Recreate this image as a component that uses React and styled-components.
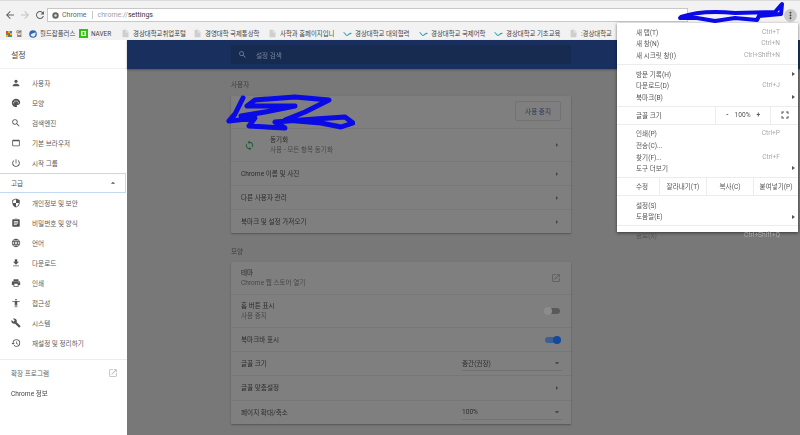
import React from 'react';
import styled, { createGlobalStyle } from 'styled-components';
import {
  MdPerson, MdPalette, MdSearch, MdWebAsset, MdPowerSettingsNew, MdSecurity, MdAssignment,
  MdLanguage, MdFileDownload, MdPrint, MdAccessibility, MdBuild, MdRestore, MdOpenInNew,
  MdSync, MdArrowDropDown, MdArrowDropUp, MdArrowBack, MdArrowForward, MdRefresh,
  MdMoreVert, MdFullscreen, MdInsertDriveFile,
} from 'react-icons/md';

const GlobalStyle = createGlobalStyle`
  html, body { margin: 0; padding: 0; width: 800px; height: 435px; overflow: hidden; background: #777; }
  * { box-sizing: border-box; }
  body { font-family: Roboto, "Noto Sans CJK KR", "Liberation Sans", sans-serif; }
`;

const Page = styled.div`
  position: relative;
  width: 800px;
  height: 435px;
  overflow: hidden;
  filter: blur(0.35px);
`;

const Toolbar = styled.div`
  display: flex;
  align-items: center;
  height: 27px;
  padding: 2px 3px 0 2px;
  background: #f2f2f2;
  border-top: 1px solid #dcdcdc;
`;

const NavButton = styled.span`
  display: flex;
  width: 15px;
  justify-content: center;
  color: ${(p) => (p.$off ? '#c4c4c4' : '#5f6368')};
  font-size: 12px;
`;

const Omnibox = styled.div`
  display: flex;
  align-items: center;
  flex: 1;
  height: 14px;
  margin-left: 0;
  padding-left: 4px;
  background: #fff;
  border: 1px solid #c8c8c8;
  font-size: 7px;
`;

const SiteLabel = styled.span`
  color: #666;
  padding: 0 5px 0 3px;
  border-right: 1px solid #c8c8c8;
  margin-right: 5px;
`;

const Url = styled.span`
  color: #333;
  em { color: #a0a0a0; font-style: normal; }
`;

const MenuDot = styled.span`
  display: flex;
  align-items: center;
  justify-content: center;
  width: 13px;
  height: 13px;
  margin-left: 96px;
  border-radius: 50%;
  background: #c9c9c9;
  color: #444;
  font-size: 11px;
`;

const Bookmarks = styled.div`
  display: flex;
  align-items: center;
  height: 13px;
  padding-left: 6px;
  background: #f2f2f2;
  font-size: 6.4px;
  color: #444;
  white-space: nowrap;
`;

const Bookmark = styled.span`
  display: flex;
  align-items: center;
  gap: 3px;
  width: ${(p) => p.$w}px;
  flex: none;
  overflow: hidden;
  svg { flex: none; }
`;

const AppsGrid = styled.span`
  display: grid;
  grid-template-columns: repeat(3, 2px);
  gap: 0;
  width: 6px;
  height: 6px;
  margin-right: 4px;
  i { width: 2px; height: 2px; }
`;

const Body = styled.div`
  display: flex;
  height: 395px;
`;

const Sidebar = styled.aside`
  width: 127px;
  flex: none;
  background: #fff;
  color: #5a5a5a;
  font-size: 6.6px;
`;

const SideTitle = styled.div`
  height: 29px;
  padding: 9px 0 0 11px;
  font-size: 8px;
  color: #444;
  border-bottom: 1px solid #f0f0f0;
`;

const SideList = styled.div`
  padding-top: 4px;
`;

const SideRow = styled.div`
  display: flex;
  align-items: center;
  height: 20px;
  padding-left: 11px;
  gap: 11px;
  svg { font-size: 10px; color: #555; flex: none; }
`;

const Advanced = styled.div`
  display: flex;
  align-items: center;
  justify-content: space-between;
  height: 20px;
  margin: 0 1px 0 0;
  padding: 0 7px 0 11px;
  border: 1px solid #c4d7f3;
  border-left: 0;
  color: #555;
  svg { font-size: 10px; }
`;

const SideDivider = styled.div`
  height: 1px;
  margin: 6px 0 3px;
  background: #ececec;
`;

const SideLink = styled.div`
  display: flex;
  align-items: center;
  justify-content: space-between;
  height: 20px;
  padding: 0 9px 0 11px;
  color: ${(p) => p.$color || '#666'};
  svg { font-size: 10px; color: #bbb; }
`;

const Main = styled.main`
  flex: 1;
  background: #787878;
  color: #333;
  font-size: 6.6px;
`;

const Banner = styled.div`
  height: 29px;
  padding: 5px 0 0 104px;
  background: #19305f;
  box-shadow: 0 1px 2px rgba(0, 0, 0, 0.3);
`;

const SearchBox = styled.div`
  display: flex;
  align-items: center;
  gap: 9px;
  width: 340px;
  height: 19px;
  padding-left: 7px;
  background: #172a50;
  color: #76839c;
  font-size: 6.6px;
  svg { font-size: 9px; }
`;

const Content = styled.div`
  width: 340px;
  margin-left: 104px;
`;

const SectionLabel = styled.div`
  height: ${(p) => p.$h}px;
  padding-top: ${(p) => p.$top}px;
  color: #3e3e3e;
  font-size: 6.6px;
`;

const Card = styled.section`
  background: #7f7f7f;
  border-radius: 1px;
  box-shadow: 0 1px 2px rgba(0, 0, 0, 0.3);
`;

const Row = styled.div`
  display: flex;
  align-items: center;
  height: ${(p) => p.$h}px;
  padding: 0 10px;
  border-top: ${(p) => (p.$first ? '0' : '1px solid #777')};
`;

const RowText = styled.div`
  flex: 1;
  line-height: 10px;
  color: #2c2c2c;
  small { display: block; font-size: 6.6px; color: #484848; }
`;

const SyncIcon = styled.span`
  display: flex;
  width: 29px;
  padding-left: 3px;
  color: #1f5a34;
  font-size: 11px;
`;

const Chevron = styled.span`
  width: 0;
  height: 0;
  margin-right: 3px;
  border-left: 2.5px solid #444;
  border-top: 2px solid transparent;
  border-bottom: 2px solid transparent;
`;

const StopButton = styled.span`
  padding: 4px 9px;
  margin-bottom: 2px;
  border: 1px solid #727272;
  border-radius: 2px;
  color: #2b3a55;
`;

const ExternalIcon = styled.span`
  display: flex;
  color: #5c5c5c;
  font-size: 10px;
`;

const Toggle = styled.span`
  position: relative;
  width: 15px;
  height: 6px;
  margin-right: 1px;
  border-radius: 3px;
  background: ${(p) => (p.$on ? '#3e5f93' : '#5a5a5a')};
  &::after {
    content: '';
    position: absolute;
    top: -1px;
    left: ${(p) => (p.$on ? '8px' : '-1px')};
    width: 8px;
    height: 8px;
    border-radius: 50%;
    background: ${(p) => (p.$on ? '#15479c' : '#8c8c8c')};
  }
`;

const SelectBox = styled.div`
  display: flex;
  align-items: center;
  justify-content: space-between;
  width: 100px;
  height: 14px;
  margin-right: -1px;
  border-bottom: 1px solid #727272;
  color: #2c2c2c;
  svg { font-size: 10px; color: #3a3a3a; }
`;

const Menu = styled.nav`
  position: absolute;
  top: 23px;
  left: 617px;
  width: 181px;
  height: 209px;
  background: #fff;
  box-shadow: 0 1px 3px rgba(0, 0, 0, 0.55);
  color: #555;
  font-size: 6.6px;
  padding-top: 3px;
`;

const MenuItem = styled.div`
  position: relative;
  display: flex;
  align-items: center;
  justify-content: space-between;
  height: 11.6px;
  padding: 0 18px 0 19px;
  white-space: nowrap;
  span { color: #a8a8a8; }
  &[data-sub]::after {
    content: '';
    position: absolute;
    right: 3px;
    top: 4px;
    border-left: 3px solid #555;
    border-top: 2px solid transparent;
    border-bottom: 2px solid transparent;
  }
`;

const MenuRule = styled.div`
  height: 1px;
  margin: ${(p) => p.$m || '3px 0 3px'};
  background: #ececec;
`;

const ZoomRow = styled.div`
  display: flex;
  align-items: center;
  height: 17px;
  padding-left: 19px;
`;

const ZoomLabel = styled.div`
  width: 79px;
`;

const ZoomControls = styled.div`
  display: flex;
  align-items: center;
  justify-content: space-between;
  width: 56px;
  height: 100%;
  padding: 0 10px;
  border-left: 1px solid #ececec;
  border-right: 1px solid #ececec;
`;

const ZoomFull = styled.div`
  display: flex;
  flex: 1;
  justify-content: center;
  color: #555;
  font-size: 12px;
`;

const EditRow = styled.div`
  display: flex;
  align-items: center;
  height: 17px;
`;

const EditCell = styled.div`
  display: flex;
  align-items: center;
  justify-content: center;
  width: ${(p) => p.$w}px;
  height: 100%;
  border-left: ${(p) => (p.$first ? '0' : '1px solid #ececec')};
  padding-left: ${(p) => (p.$first ? '19px' : '0')};
  justify-content: ${(p) => (p.$first ? 'flex-start' : 'center')};
`;

const Scribble = styled.svg`
  position: absolute;
  fill: none;
  stroke: #0a0ae6;
  stroke-linecap: round;
  stroke-linejoin: round;
  pointer-events: none;
`;

const sideTop = [
  [MdPerson, '사용자'], [MdPalette, '모양'], [MdSearch, '검색엔진'],
  [MdWebAsset, '기본 브라우저'], [MdPowerSettingsNew, '시작 그룹'],
];
const sideAdvanced = [
  [MdSecurity, '개인정보 및 보안'], [MdAssignment, '비밀번호 및 양식'], [MdLanguage, '언어'],
  [MdFileDownload, '다운로드'], [MdPrint, '인쇄'], [MdAccessibility, '접근성'],
  [MdBuild, '시스템'], [MdRestore, '재설정 및 정리하기'],
];

const bookmarkItems = [
  ['doc', '경상대학교취업포털', 72], ['doc', '경영대학 국제통상학', 75], ['doc', '사학과 홈페이지입니', 75],
  ['wave', '경상대학교 대외협력', 76], ['wave', '경상대학교 국제어학', 75], ['wave', '경상대학교 기초교육', 75],
  ['doc', ':경상대학교', 44],
];

const appColors = ['#e8453c', '#f4b400', '#3b78e7', '#34a853', '#e8453c', '#f4b400', '#f4b400', '#3b78e7', '#34a853'];

function Wave() {
  return (
    <svg width="9" height="6" viewBox="0 0 9 6" fill="none" stroke="#2aa5b5" strokeWidth="1.1">
      <path d="M0.5 1.5 C2 1.5 2.5 4.5 4 4.5 S6.5 1.5 8.5 2.5" />
    </svg>
  );
}

export default function App() {
  return (
    <Page>
      <GlobalStyle />
      <Toolbar>
        <NavButton><MdArrowBack /></NavButton>
        <NavButton $off><MdArrowForward /></NavButton>
        <NavButton><MdRefresh /></NavButton>
        <Omnibox>
          <svg width="7" height="7" viewBox="0 0 7 7"><circle cx="3.5" cy="3.5" r="3.2" fill="#666" /><circle cx="3.5" cy="3.5" r="1.3" fill="#ddd" /></svg>
          <SiteLabel>Chrome</SiteLabel>
          <Url><em>chrome://</em>settings</Url>
        </Omnibox>
        <MenuDot><MdMoreVert /></MenuDot>
      </Toolbar>
      <Bookmarks>
        <AppsGrid>{appColors.map((c, i) => <i key={i} style={{ background: c }} />)}</AppsGrid>
        <Bookmark $w={13}>앱</Bookmark>
        <Bookmark $w={50}>
          <svg width="8" height="8" viewBox="0 0 8 8"><circle cx="4" cy="4" r="3.8" fill="#2f66ae" /><path d="M1.5 5 C3 3 5 3 6.8 2.5 L6 6 C4 7.5 2.5 6.5 1.5 5Z" fill="#e8eef6" /></svg>
          월드잡플러스
        </Bookmark>
        <Bookmark $w={42}>
          <svg width="9" height="9" viewBox="0 0 9 9"><rect width="9" height="9" fill="#2fc40f" /><rect x="2" y="2" width="5" height="5" fill="#fff" /><rect x="3.5" y="3" width="2" height="3" fill="#2fc40f" /></svg>
          NAVER
        </Bookmark>
        {bookmarkItems.map(([kind, label, w]) => (
          <Bookmark key={label} $w={w}>
            {kind === 'doc' ? <MdInsertDriveFile size={9} color="#cfcfcf" /> : <Wave />}
            {label}
          </Bookmark>
        ))}
      </Bookmarks>
      <Body>
        <Sidebar>
          <SideTitle>설정</SideTitle>
          <SideList>
            {sideTop.map(([Icon, label]) => <SideRow key={label}><Icon />{label}</SideRow>)}
          </SideList>
          <Advanced>고급<MdArrowDropUp /></Advanced>
          {sideAdvanced.map(([Icon, label]) => <SideRow key={label}><Icon />{label}</SideRow>)}
          <SideDivider />
          <SideLink>확장 프로그램<MdOpenInNew /></SideLink>
          <SideLink $color="#444">Chrome 정보</SideLink>
        </Sidebar>
        <Main>
          <Banner>
            <SearchBox><MdSearch />설정 검색</SearchBox>
          </Banner>
          <Content>
            <SectionLabel $h={27} $top={10}>사용자</SectionLabel>
            <Card>
              <Row $h={32} $first>
                <RowText />
                <StopButton>사용 중지</StopButton>
              </Row>
              <Row $h={33}>
                <SyncIcon><MdSync /></SyncIcon>
                <RowText>동기화<small>사용 - 모든 항목 동기화</small></RowText>
                <Chevron />
              </Row>
              <Row $h={24}><RowText>Chrome 이름 및 사진</RowText><Chevron /></Row>
              <Row $h={24}><RowText>다른 사용자 관리</RowText><Chevron /></Row>
              <Row $h={24}><RowText>북마크 및 설정 가져오기</RowText><Chevron /></Row>
            </Card>
            <SectionLabel $h={29} $top={13}>모양</SectionLabel>
            <Card>
              <Row $h={32} $first>
                <RowText>테마<small>Chrome 웹 스토어 열기</small></RowText>
                <ExternalIcon><MdOpenInNew /></ExternalIcon>
              </Row>
              <Row $h={33}>
                <RowText>홈 버튼 표시<small>사용 중지</small></RowText>
                <Toggle />
              </Row>
              <Row $h={24}><RowText>북마크바 표시</RowText><Toggle $on /></Row>
              <Row $h={24}>
                <RowText>글꼴 크기</RowText>
                <SelectBox>중간(권장)<MdArrowDropDown /></SelectBox>
              </Row>
              <Row $h={25}><RowText>글꼴 맞춤설정</RowText><Chevron /></Row>
              <Row $h={24}>
                <RowText>페이지 확대/축소</RowText>
                <SelectBox>100%<MdArrowDropDown /></SelectBox>
              </Row>
            </Card>
          </Content>
        </Main>
      </Body>

      <Menu>
        <MenuItem>새 탭(T)<span>Ctrl+T</span></MenuItem>
        <MenuItem>새 창(N)<span>Ctrl+N</span></MenuItem>
        <MenuItem>새 시크릿 창(I)<span>Ctrl+Shift+N</span></MenuItem>
        <MenuRule />
        <MenuItem data-sub>방문 기록(H)</MenuItem>
        <MenuItem>다운로드(D)<span>Ctrl+J</span></MenuItem>
        <MenuItem data-sub>북마크(B)</MenuItem>
        <MenuRule $m="3px 0 0" />
        <ZoomRow>
          <ZoomLabel>글꼴 크기</ZoomLabel>
          <ZoomControls><b>-</b>100%<b>+</b></ZoomControls>
          <ZoomFull><MdFullscreen /></ZoomFull>
        </ZoomRow>
        <MenuRule $m="0 0 3px" />
        <MenuItem>인쇄(P)<span>Ctrl+P</span></MenuItem>
        <MenuItem>전송(C)...</MenuItem>
        <MenuItem>찾기(F)...<span>Ctrl+F</span></MenuItem>
        <MenuItem data-sub>도구 더보기</MenuItem>
        <MenuRule $m="3px 0 0" />
        <EditRow>
          <EditCell $first $w={42}>수정</EditCell>
          <EditCell $w={47}>잘라내기(T)</EditCell>
          <EditCell $w={47}>복사(C)</EditCell>
          <EditCell $w={45}>붙여넣기(P)</EditCell>
        </EditRow>
        <MenuRule $m="0 0 3px" />
        <MenuItem>설정(S)</MenuItem>
        <MenuItem data-sub>도움말(E)</MenuItem>
        <MenuRule />
        <MenuItem>종료(X)<span>Ctrl+Shift+Q</span></MenuItem>
      </Menu>

      <Scribble width="110" height="30" viewBox="0 0 110 30" strokeWidth="4" style={{ left: 675, top: 0 }}>
        <path d="M6 17 C20 12 40 11 60 13 L100 12 L107 4 L106 14 L84 16 L82 20 L60 18 L40 21 L22 18 L5 18" />
      </Scribble>
      <Scribble width="130" height="42" viewBox="0 0 130 42" strokeWidth="5" style={{ left: 225, top: 92 }}>
        <path d="M18 6 L10 22 L4 29 L30 26 L24 34 L60 36 L50 30 L90 27 L120 25 L128 31 L116 35 L96 31 L60 28 L80 20 L104 8 L70 5 L30 8 L22 14 L70 14 L40 20 L16 24" />
      </Scribble>
    </Page>
  );
}
